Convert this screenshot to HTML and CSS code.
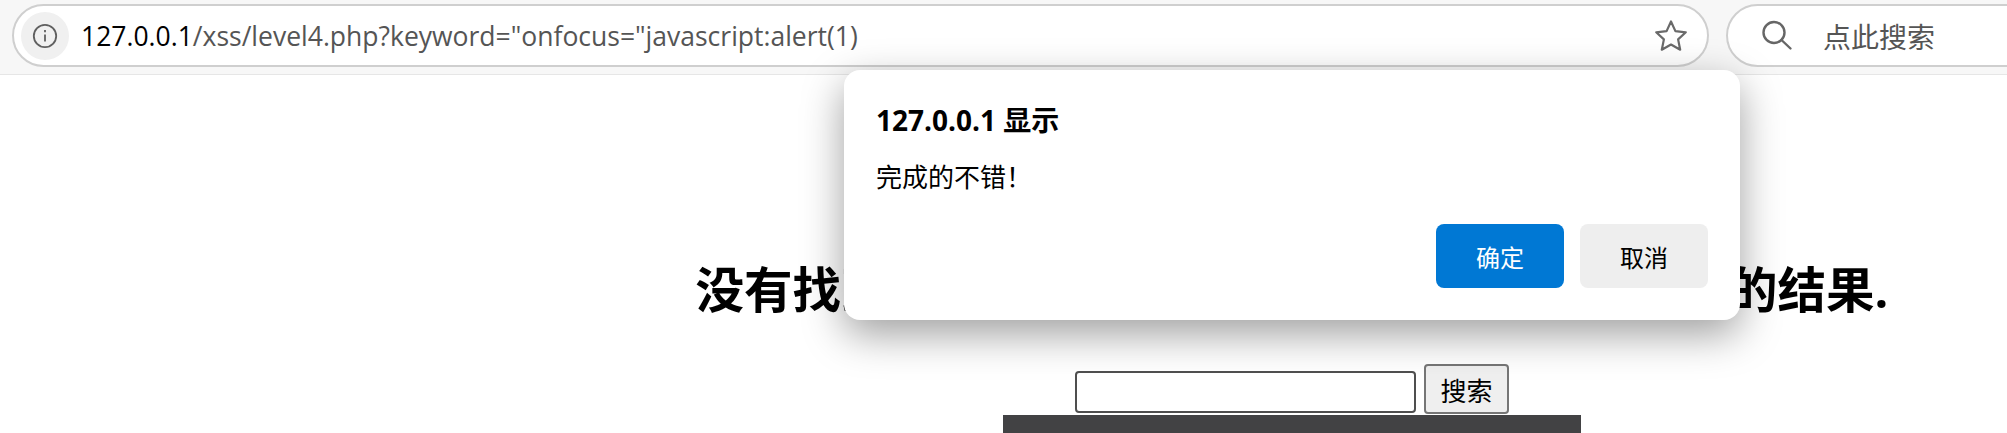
FILE: index.html
```html
<!DOCTYPE HTML>
<html>
<head>
<meta charset="utf-8">
<title>欢迎来到level4</title>
<link rel="stylesheet" href="styles.css">
</head>
<body>
  <div class="toolbar">
    <div class="address">
      <span class="info">
        <svg width="26" height="26" viewBox="0 0 26 26" fill="none" stroke="#5f5f5f" stroke-width="1.8">
          <circle cx="13" cy="13" r="11.2"/>
          <path d="M13 11.5v7"/>
          <path d="M13 7v2.2"/>
        </svg>
      </span>
      <span class="url"><span class="host">127.0.0.1</span>/xss/level4.php?keyword="onfocus="javascript:alert(1)</span>
      <svg class="star" width="36" height="36" viewBox="0 0 36 36" fill="none" stroke="#6a6a6a" stroke-width="2.2" stroke-linejoin="round">
        <path d="M18 3.5l4.4 9.6 10.4 1.2-7.7 7.1 2.1 10.3-9.2-5.2-9.2 5.2 2.1-10.3-7.7-7.1 10.4-1.2z"/>
      </svg>
    </div>
    <div class="search">
      <svg width="32" height="32" viewBox="0 0 32 32" fill="none" stroke="#666" stroke-width="2.4" stroke-linecap="round">
        <circle cx="13" cy="12.5" r="10.5"/>
        <path d="M20.5 20l9 8.5"/>
      </svg>
      <span class="search-text">点此搜索</span>
    </div>
  </div>

  <div class="page">
    <h2 class="result">没有找到和"onfocus="javascript:alert(1)相关的结果.</h2>
    <form class="form">
      <input class="keyword" type="text">
      <button class="submit" type="button">搜索</button>
    </form>
    <div class="level-img"></div>
  </div>

  <div class="dialog">
    <div class="dialog-title">127.0.0.1 显示</div>
    <div class="dialog-msg">完成的不错！</div>
    <div class="dialog-btns">
      <button class="btn ok" type="button">确定</button>
      <button class="btn cancel" type="button">取消</button>
    </div>
  </div>
</body>
</html>
```
FILE: styles.css
```css
html,body{
  margin: 0;
  height: 100%;
  overflow: hidden;
  background: #fff;
  font-family: "Open Sans", "Noto Sans CJK SC", sans-serif;
}
.toolbar{
  display: flex;
  gap: 17px;
  width: 2200px;
  height: 75px;
  box-sizing: border-box;
  padding: 4px 0 0 12px;
  background: #f7f7f7;
  border-bottom: 1px solid #e6e6e6;
}
.address{
  display: flex;
  align-items: center;
  width: 1697px;
  height: 63px;
  box-sizing: border-box;
  padding: 0 18px 0 7px;
  background: #fff;
  border: 2px solid #cfcfcf;
  border-radius: 32px;
}
.info{
  display: flex;
  align-items: center;
  justify-content: center;
  width: 48px;
  height: 48px;
  border-radius: 50%;
  background: #f0f0f0;
}
.url{
  flex: 1;
  margin-left: 12px;
  font-size: 26.5px;
  color: #555;
  white-space: nowrap;
}
.host{
  color: #000;
}
.search{
  display: flex;
  align-items: center;
  flex: 1;
  height: 63px;
  box-sizing: border-box;
  padding-left: 33px;
  background: #fff;
  border: 2px solid #cfcfcf;
  border-radius: 32px;
}
.search-text{
  margin-left: 30px;
  font-size: 28px;
  color: #555;
}
.page{
  width: 2584px;
  text-align: center;
}
.result{
  margin: 0;
  padding-top: 182px;
  font-size: 48.5px;
  line-height: 64px;
  font-weight: 700;
  color: #000;
}
.form{
  display: flex;
  justify-content: center;
  align-items: flex-end;
  gap: 8px;
  height: 50px;
  margin-top: 43px;
}
.keyword{
  width: 341px;
  height: 42px;
  box-sizing: border-box;
  margin-bottom: 1px;
  border: 2px solid #4f4f4f;
  border-radius: 4px;
  background: #fff;
}
.submit{
  width: 85px;
  height: 50px;
  padding: 0;
  background: #efefef;
  border: 2px solid #767676;
  border-radius: 4px;
  font-family: "Noto Sans CJK SC", sans-serif;
  font-size: 26px;
  color: #000;
}
.level-img{
  width: 578px;
  height: 18px;
  margin: 1px auto 0;
  background: #424244;
}
.dialog{
  position: absolute;
  left: 844px;
  top: 70px;
  display: flex;
  flex-direction: column;
  width: 896px;
  height: 250px;
  box-sizing: border-box;
  padding: 32px;
  background: #fff;
  border-radius: 16px;
  box-shadow: 0 14px 42px rgba(0,0,0,.38);
  color: #000;
}
.dialog-title{
  font-size: 28px;
  font-weight: 700;
  line-height: 36px;
}
.dialog-msg{
  margin-top: 21px;
  font-size: 26px;
  line-height: 36px;
}
.dialog-btns{
  display: flex;
  justify-content: flex-end;
  gap: 16px;
  margin-top: auto;
}
.btn{
  width: 128px;
  height: 64px;
  padding: 0;
  border: 0;
  border-radius: 8px;
  font-family: "Noto Sans CJK SC", sans-serif;
  font-size: 24px;
}
.ok{
  background: #0078d4;
  color: #fff;
}
.cancel{
  background: #eeeeee;
  color: #000;
}
```
